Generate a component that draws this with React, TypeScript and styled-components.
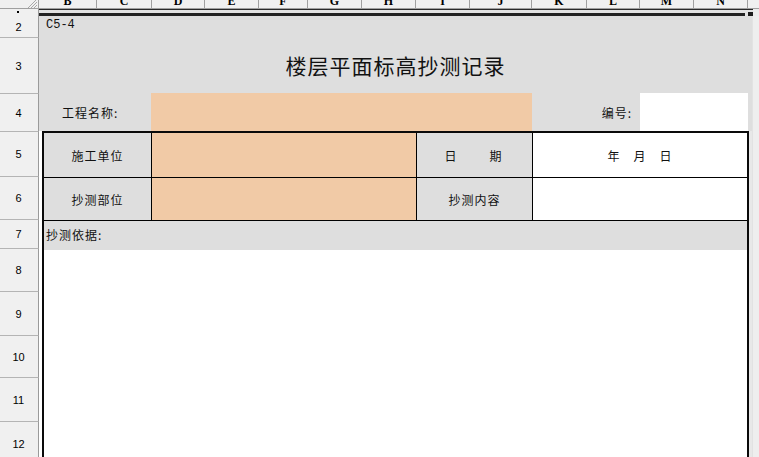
import React from "react";
import styled, { createGlobalStyle } from "styled-components";

const GlobalStyle = createGlobalStyle`
  html, body { margin: 0; padding: 0; }
  body {
    background: #ececec;
    font-family: "Noto Sans CJK SC", "Liberation Sans", sans-serif;
  }
  * { box-sizing: border-box; }
`;

const Window = styled.div`
  width: 759px;
  height: 457px;
  overflow: hidden;
  display: flex;
  flex-direction: column;
  background: #ececec;
`;

/* ---------- column header ---------- */
const ColHeaderBar = styled.div`
  display: flex;
  flex: none;
  height: 9px;
  background: #f0f0f0;
  border-bottom: 1px solid #a0a0a0;
`;

const Corner = styled.div`
  width: 39px;
  flex: none;
  display: flex;
  justify-content: flex-end;
  border-right: 1px solid #a0a0a0;
  padding-right: 1px;
`;

const ColHead = styled.div<{ $w: number }>`
  width: ${(p) => p.$w}px;
  flex: none;
  overflow: hidden;
  display: flex;
  justify-content: center;
  border-right: 1px solid #a0a0a0;
`;

const ColLetter = styled.span`
  font: bold 12px/12px "Liberation Serif", serif;
  color: #000;
  transform: translateY(-5px);
`;

/* ---------- frozen split ---------- */
const SplitRow = styled.div`
  display: flex;
  flex: none;
  height: 7px;
`;

const RowHeadTiny = styled.div`
  width: 39px;
  flex: none;
  background: #f0f0f0;
  border-right: 1px solid #9a9a9a;
  display: flex;
  justify-content: center;
  padding-top: 2px;
`;

const Dot = styled.span`
  width: 2px;
  height: 2px;
  background: #000;
  margin-right: 2px;
`;

const SplitLines = styled.div`
  width: 714px;
  flex: none;
  display: flex;
  flex-direction: column;
  background: #e2e2e2;
`;

const ThinLine = styled.div`
  height: 1px;
  background: #2a2a2a;
`;

const SplitGap = styled.div`
  height: 3px;
`;

const ThickRow = styled.div`
  display: flex;
  height: 3px;
  align-items: flex-start;
`;

const ThickLine = styled.div`
  width: 709px;
  height: 3px;
  background: #222;
`;

const SplitKnob = styled.div`
  width: 5px;
  height: 4px;
  margin-left: 3px;
  margin-top: -1px;
  background: #1c1c1c;
`;

/* ---------- body ---------- */
const Body = styled.div`
  display: flex;
  flex: 1;
  min-height: 0;
`;

const RowHeads = styled.div`
  width: 39px;
  flex: none;
  display: flex;
  flex-direction: column;
`;

const RowHead = styled.div<{ $h: number }>`
  height: ${(p) => p.$h}px;
  flex: none;
  background: #f0f0f0;
  border-right: 1px solid #9a9a9a;
  border-bottom: 1px solid #b4b4b4;
  display: flex;
  align-items: center;
  justify-content: center;
  font: 11px "Liberation Sans", Arial, sans-serif;
  color: #000;
  padding-right: 1px;
`;

const Sheet = styled.div`
  width: 713px;
  flex: none;
  display: flex;
  flex-direction: column;
`;

const TopArea = styled.div`
  background: #dedede;
  display: flex;
  flex-direction: column;
`;

const CodeRow = styled.div`
  height: 22px;
  display: flex;
  align-items: center;
  padding-left: 7px;
  padding-bottom: 4px;
  font: 12px "Liberation Mono", monospace;
  color: #111;
`;

const TitleRow = styled.div`
  height: 55px;
  display: flex;
  align-items: center;
  justify-content: center;
  font-size: 21px;
  letter-spacing: 1px;
  color: #111;
  padding-bottom: 2px;
`;

const InfoRow = styled.div`
  height: 38px;
  display: flex;
`;

const InfoLabel = styled.div<{ $w: number; $right?: boolean }>`
  width: ${(p) => p.$w}px;
  flex: none;
  display: flex;
  align-items: center;
  justify-content: ${(p) => (p.$right ? "flex-end" : "flex-start")};
  padding: ${(p) => (p.$right ? "0 8px 0 0" : "0 0 0 23px")};
  font-size: 12px;
  letter-spacing: 1px;
  color: #111;
`;

const Field = styled.div<{ $w: number; $tone: "orange" | "white" }>`
  width: ${(p) => p.$w}px;
  flex: none;
  background: ${(p) => (p.$tone === "orange" ? "#f1caa6" : "#ffffff")};
`;

const TableArea = styled.div`
  flex: 1;
  display: flex;
  background: #ffffff;
  padding-left: 3px;
`;

const Table = styled.div`
  width: 707px;
  flex: none;
  display: flex;
  flex-direction: column;
  border: 2px solid #0a0a0a;
  border-bottom: none;
  background: #fff;
`;

const RightGap = styled.div`
  flex: 1;
  background: #e8e8e8;
`;

const TRow = styled.div<{ $h: number }>`
  height: ${(p) => p.$h}px;
  flex: none;
  display: flex;
  border-bottom: 1px solid #000;
`;

const TCell = styled.div<{
  $w?: number;
  $tone: "gray" | "orange" | "white";
  $last?: boolean;
  $spread?: number;
}>`
  width: ${(p) => (p.$w ? `${p.$w}px` : "auto")};
  flex: ${(p) => (p.$w ? "none" : "1")};
  background: ${(p) =>
    p.$tone === "gray" ? "#dedede" : p.$tone === "orange" ? "#f1caa6" : "#ffffff"};
  border-right: ${(p) => (p.$last ? "none" : "1px solid #000")};
  display: flex;
  align-items: center;
  justify-content: center;
  font-size: 12px;
  letter-spacing: ${(p) => p.$spread ?? 1}px;
  color: #111;
  white-space: pre;
`;

const NoteRow = styled.div`
  height: 29px;
  flex: none;
  background: #dedede;
  display: flex;
  align-items: center;
  padding: 0 0 2px 2px;
  font-size: 12px;
  letter-spacing: 1px;
  color: #111;
`;

const ScrollStrip = styled.div`
  flex: 1;
  background: #eeeeee;
  border-left: 1px solid #e2e2e2;
`;

const Grip = () => (
  <svg width="12" height="8" viewBox="0 0 12 8">
    <g stroke="#a8a8a8" strokeWidth="1">
      <line x1="3" y1="8" x2="11" y2="0" />
      <line x1="6" y1="8" x2="12" y2="2" />
      <line x1="9" y1="8" x2="12" y2="5" />
    </g>
  </svg>
);

const columns: [string, number][] = [
  ["B", 58],
  ["C", 55],
  ["D", 53],
  ["E", 54],
  ["F", 49],
  ["G", 54],
  ["H", 54],
  ["I", 54],
  ["J", 62],
  ["K", 55],
  ["L", 53],
  ["M", 54],
  ["N", 54],
];

const rows: [string, number][] = [
  ["2", 22],
  ["3", 56],
  ["4", 38],
  ["5", 45],
  ["6", 43],
  ["7", 29],
  ["8", 43],
  ["9", 44],
  ["10", 42],
  ["11", 44],
  ["12", 44],
];

export default function App() {
  return (
    <>
      <GlobalStyle />
      <Window>
        <ColHeaderBar>
          <Corner>
            <Grip />
          </Corner>
          {columns.map(([l, w]) => (
            <ColHead key={l} $w={w}>
              <ColLetter>{l}</ColLetter>
            </ColHead>
          ))}
        </ColHeaderBar>

        <SplitRow>
          <RowHeadTiny>
            <Dot />
          </RowHeadTiny>
          <SplitLines>
            <ThinLine />
            <SplitGap />
            <ThickRow>
              <ThickLine />
              <SplitKnob />
            </ThickRow>
          </SplitLines>
        </SplitRow>

        <Body>
          <RowHeads>
            {rows.map(([n, h]) => (
              <RowHead key={n} $h={h}>
                {n}
              </RowHead>
            ))}
          </RowHeads>

          <Sheet>
            <TopArea>
              <CodeRow>C5-4</CodeRow>
              <TitleRow>楼层平面标高抄测记录</TitleRow>
              <InfoRow>
                <InfoLabel $w={112}>工程名称:</InfoLabel>
                <Field $w={381} $tone="orange" />
                <InfoLabel $w={108} $right>
                  编号:
                </InfoLabel>
                <Field $w={108} $tone="white" />
              </InfoRow>
            </TopArea>

            <TableArea>
              <Table>
                <TRow $h={45}>
                  <TCell $w={108} $tone="gray">施工单位</TCell>
                  <TCell $w={265} $tone="orange" />
                  <TCell $w={116} $tone="gray" $spread={3}>
                    {"日　　期"}
                  </TCell>
                  <TCell $tone="white" $last>
                    {"年　月　日"}
                  </TCell>
                </TRow>
                <TRow $h={43}>
                  <TCell $w={108} $tone="gray">抄测部位</TCell>
                  <TCell $w={265} $tone="orange" />
                  <TCell $w={116} $tone="gray">抄测内容</TCell>
                  <TCell $tone="white" $last />
                </TRow>
                <NoteRow>抄测依据:</NoteRow>
              </Table>
              <RightGap />
            </TableArea>
          </Sheet>

          <ScrollStrip />
        </Body>
      </Window>
    </>
  );
}
